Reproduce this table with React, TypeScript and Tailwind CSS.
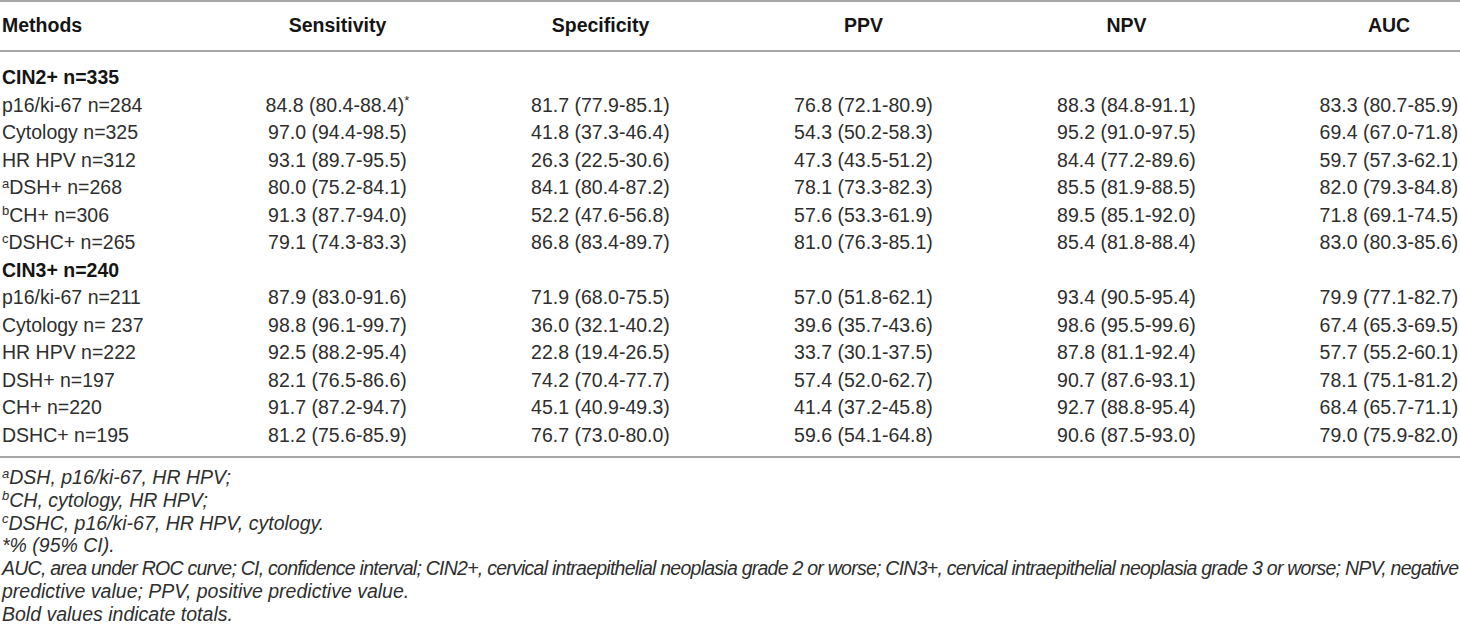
const COLS = ["Sensitivity", "Specificity", "PPV", "NPV", "AUC"];

type Row = { label: React.ReactNode; values?: string[]; group?: boolean };

const Sup = ({ c }: { c: string }) => <sup className="text-[13px]">{c}</sup>;

const rows: Row[] = [
  { label: "CIN2+ n=335", group: true },
  { label: "p16/ki-67 n=284", values: ["84.8 (80.4-88.4)*", "81.7 (77.9-85.1)", "76.8 (72.1-80.9)", "88.3 (84.8-91.1)", "83.3 (80.7-85.9)"] },
  { label: "Cytology n=325", values: ["97.0 (94.4-98.5)", "41.8 (37.3-46.4)", "54.3 (50.2-58.3)", "95.2 (91.0-97.5)", "69.4 (67.0-71.8)"] },
  { label: "HR HPV n=312", values: ["93.1 (89.7-95.5)", "26.3 (22.5-30.6)", "47.3 (43.5-51.2)", "84.4 (77.2-89.6)", "59.7 (57.3-62.1)"] },
  { label: <><Sup c="a" />DSH+ n=268</>, values: ["80.0 (75.2-84.1)", "84.1 (80.4-87.2)", "78.1 (73.3-82.3)", "85.5 (81.9-88.5)", "82.0 (79.3-84.8)"] },
  { label: <><Sup c="b" />CH+ n=306</>, values: ["91.3 (87.7-94.0)", "52.2 (47.6-56.8)", "57.6 (53.3-61.9)", "89.5 (85.1-92.0)", "71.8 (69.1-74.5)"] },
  { label: <><Sup c="c" />DSHC+ n=265</>, values: ["79.1 (74.3-83.3)", "86.8 (83.4-89.7)", "81.0 (76.3-85.1)", "85.4 (81.8-88.4)", "83.0 (80.3-85.6)"] },
  { label: "CIN3+ n=240", group: true },
  { label: "p16/ki-67 n=211", values: ["87.9 (83.0-91.6)", "71.9 (68.0-75.5)", "57.0 (51.8-62.1)", "93.4 (90.5-95.4)", "79.9 (77.1-82.7)"] },
  { label: "Cytology n= 237", values: ["98.8 (96.1-99.7)", "36.0 (32.1-40.2)", "39.6 (35.7-43.6)", "98.6 (95.5-99.6)", "67.4 (65.3-69.5)"] },
  { label: "HR HPV n=222", values: ["92.5 (88.2-95.4)", "22.8 (19.4-26.5)", "33.7 (30.1-37.5)", "87.8 (81.1-92.4)", "57.7 (55.2-60.1)"] },
  { label: "DSH+ n=197", values: ["82.1 (76.5-86.6)", "74.2 (70.4-77.7)", "57.4 (52.0-62.7)", "90.7 (87.6-93.1)", "78.1 (75.1-81.2)"] },
  { label: "CH+ n=220", values: ["91.7 (87.2-94.7)", "45.1 (40.9-49.3)", "41.4 (37.2-45.8)", "92.7 (88.8-95.4)", "68.4 (65.7-71.1)"] },
  { label: "DSHC+ n=195", values: ["81.2 (75.6-85.9)", "76.7 (73.0-80.0)", "59.6 (54.1-64.8)", "90.6 (87.5-93.0)", "79.0 (75.9-82.0)"] },
];

// last column runs past the visible edge, the way the source table is cropped
const grid = "grid grid-cols-[206px_263px_263px_263px_263px_262px]";

export default function App() {
  return (
    <div className="w-[1460px] h-[640px] overflow-hidden bg-white text-[#2e2e2e] font-['Liberation_Sans',Arial,sans-serif] text-[19.5px]">
      <div className="w-[1520px]">
        <div className={`${grid} h-[52px] items-center border-y-2 border-[#a6a6a6] font-bold text-[#151515]`}>
          <div className="pl-[2px]">Methods</div>
          {COLS.map((c) => (
            <div key={c} className="text-center">{c}</div>
          ))}
        </div>
        <div className="pt-[11px] pb-[8px] border-b-2 border-[#a6a6a6]">
          {rows.map((r, i) => (
            <div key={i} className={`${grid} h-[27.5px] items-center whitespace-nowrap`}>
              <div className={r.group ? "pl-[2px] font-bold text-[#151515]" : "pl-[2px]"}>{r.label}</div>
              {r.values?.map((v, j) => (
                <div key={j} className="text-center">
                  {v.endsWith("*") ? <>{v.slice(0, -1)}<sup className="text-[13px]">*</sup></> : v}
                </div>
              ))}
            </div>
          ))}
        </div>
      </div>
      <div className="pt-[8px] pl-[2px] italic leading-[22.8px] whitespace-nowrap">
        <div><Sup c="a" />DSH, p16/ki-67, HR HPV;</div>
        <div><Sup c="b" />CH, cytology, HR HPV;</div>
        <div><Sup c="c" />DSHC, p16/ki-67, HR HPV, cytology.</div>
        <div>*% (95% CI).</div>
        <div className="tracking-[-0.75px]">AUC, area under ROC curve; CI, confidence interval; CIN2+, cervical intraepithelial neoplasia grade 2 or worse; CIN3+, cervical intraepithelial neoplasia grade 3 or worse; NPV, negative</div>
        <div>predictive value; PPV, positive predictive value.</div>
        <div>Bold values indicate totals.</div>
      </div>
    </div>
  );
}
